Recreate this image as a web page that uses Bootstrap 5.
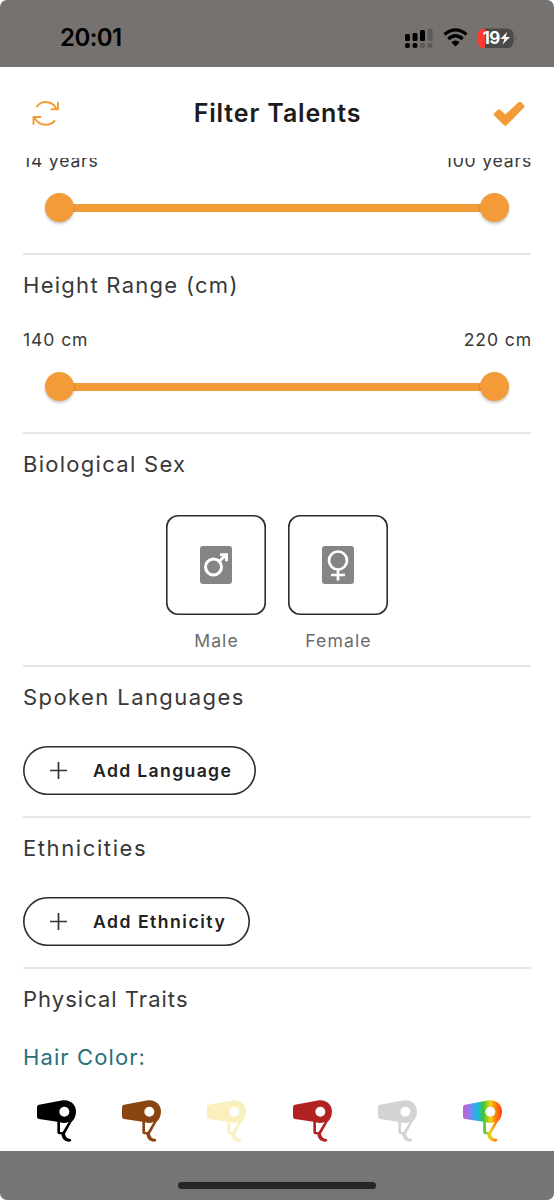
<!DOCTYPE html>
<html lang="en">
<head>
<meta charset="utf-8">
<meta name="viewport" content="width=device-width, initial-scale=1">
<title>Filter Talents</title>
<link href="https://cdn.jsdelivr.net/npm/bootstrap@5.3.0/dist/css/bootstrap.min.css" rel="stylesheet">
<style>
  body { font-family: Inter, "Noto Sans", sans-serif; color: #383838; background: #fff; }
  .phone { width: 554px; height: 1200px; border-radius: 7px; background: #fff; }
  .status { height: 67px; background: #76726f; padding: 9px 36px 0 60px; color: #000; }
  .clock { font-size: 24px; font-weight: 600; letter-spacing: -.55px; }
  .topbar { height: 91px; padding: 1px 29px 0 32px; }
  .topbar h1 { font-size: 25px; font-weight: 600; letter-spacing: .85px; color: #1c1c1e; margin: 0 -1px 0 1px; }
  .scroller { height: 993px; padding: 0 23px; }
  .block { border-bottom: 2px solid #e6e6e6; padding-top: 15px; }
  .block h2 { font-size: 22px; line-height: 30px; font-weight: 400; letter-spacing: 1.28px; margin: 0; }
  .block h2.t-wide { letter-spacing: 1.6px; }
  .block h2.t-mid { letter-spacing: 1.42px; }
  .block h2.t-slim { letter-spacing: 1.02px; }
  .ends { font-size: 17.6px; line-height: 24px; letter-spacing: .9px; font-weight: 400; margin: 28px -1px -1px 0; }
  .cut { margin-top: -9px; letter-spacing: .8px; }
  .slider { height: 29px; margin: 21px 22px 0; }
  .slider .bar { height: 8px; background: #f29b38; margin: 0 -2px; }
  .knob { width: 29px; height: 29px; border-radius: 50%; background: #f29b38; box-shadow: 0 2px 3px rgba(0,0,0,.22); position: relative; }
  .sexes { gap: 22px; margin-top: 36px; }
  .tile { width: 100px; height: 100px; box-shadow: inset 0 0 0 1.6px #2c2c2c; border-radius: 12px; background: #fff; }
  .cap { font-size: 17.6px; line-height: 24px; letter-spacing: 1.1px; font-weight: 400; color: #6c6c6c; margin: 14px -1px 0 0; }
  .pill, .pill:hover { height: 49px; border: 0; box-shadow: inset 0 0 0 1.6px #2c2c2c; border-radius: 25px; padding: 2px 24px 0 26px; margin-top: 34px; font-size: 17.6px; font-weight: 600; letter-spacing: 1.35px; color: #222; gap: 25px; }
  .pill.t-wide { letter-spacing: 1.5px; }
  .hair { color: #28707b; font-size: 22px; line-height: 30px; letter-spacing: 1.1px; font-weight: 400; margin-top: 28px; }
  .dryers { margin: 28px 29px 0 14px; }
  .foot { height: 49px; background: #757575; padding-top: 31px; }
  .home { width: 198px; height: 7px; border-radius: 4px; background: #262626; }
</style>
</head>
<body>
<svg width="0" height="0" class="position-absolute" aria-hidden="true">
  <defs>
    <linearGradient id="rainbow" gradientUnits="userSpaceOnUse" x1="0" y1="0" x2="117" y2="0">
      <stop offset="0" stop-color="#c95bd0"/><stop offset=".17" stop-color="#8a80ea"/><stop offset=".35" stop-color="#18b4ee"/><stop offset=".53" stop-color="#3fc636"/><stop offset=".7" stop-color="#f4d40c"/><stop offset=".85" stop-color="#ff7a10"/><stop offset="1" stop-color="#f8401a"/>
    </linearGradient>
    <symbol id="dryer" viewBox="0 0 117 126">
      <path fill-rule="evenodd" d="M6 14 L78 1 C100-2 117 14 117 34 C117 48 112 58 103 67 L84 101 C86 111 91 116 98 116 Q103 117 103 121 Q102 125 97 125 C82 125 75 116 73 103 H67 Q61 103 61 97 V65 L6 57 Q0 56 0 50 V21 Q0 15 6 14Z M82 20 A15 15 0 1 0 82 50 A15 15 0 1 0 82 20Z M69 67 V96 H77 L95 66 C84 70 77 69 69 67Z"/>
    </symbol>
  </defs>
</svg>
<div class="phone d-flex flex-column overflow-hidden">
  <div class="status d-flex align-items-center justify-content-between">
    <span class="clock">20:01</span>
    <svg width="114" height="24" viewBox="0 1 114 24">
      <g fill="#000"><rect x="1" y="9" width="5" height="7" rx="1.5"/><rect x="8.500" y="8" width="5" height="8" rx="1.500"/><rect x="16" y="5" width="5" height="11" rx="1.500"/><rect x="1" y="18" width="5" height="5" rx="2"/><rect x="8.500" y="18" width="5" height="5" rx="2"/></g>
      <g fill="#5d5957"><rect x="23.500" y="3.500" width="5" height="12.500" rx="1.500"/><rect x="16" y="18" width="5" height="5" rx="2"/><rect x="23.500" y="18" width="5" height="5" rx="2"/></g>
      <g fill="none" stroke="#000" stroke-width="3.300"><path d="M40.500 9.500 Q51.500 .300 62.500 9.500"/><path d="M44.300 14 Q51.500 7.500 58.700 14"/></g><path d="M47.300 17.200 Q51.500 13.800 55.700 17.200 L51.500 21.500Z"/>
      <rect x="74" y="3.500" width="35.500" height="19.500" rx="6" fill="#4a4a4a"/><path d="M81 3.500 H80 Q74 3.500 74 9.500 V17 Q74 23 80 23 H81Z" fill="#fd3b30"/><path d="M111 10.500 Q114 13 111 16Z" fill="#5d5957"/>
      <text x="78.500" y="19.300" font-size="17" font-weight="700" fill="#fff" letter-spacing="-.5">19</text><path d="M103 7 L96.500 14 H100.500 L98.500 19.500 L106 12 H101.800Z" fill="#fff"/>
    </svg>
  </div>
  <header class="topbar d-flex align-items-center justify-content-between">
    <svg width="28" height="28" viewBox="0 0 28 28" fill="none" stroke="#f29b38" stroke-width="1.900" stroke-linecap="round" stroke-linejoin="round"><path d="M5 7.500 Q8.500 2.800 14 3 Q21 3.300 24.700 10 M26 3.800 V10.300 H19.500 M22.500 22 Q19 26 13.500 25.800 Q6 25.500 2.300 18.500 M1.500 25 V18 H8.500"/></svg>
    <h1>Filter Talents</h1>
    <svg width="32" height="26" viewBox="0 -1 32 26"><path d="M1.200 12.200 L4.800 8.800 Q6 7.800 7.200 8.800 L12.200 13.600 L25.500 1.300 Q26.900 .200 28.200 1.300 L31 4.200 Q32 5.400 31 6.600 L13.600 24.300 Q12.300 25.400 11 24.300 L1.200 14.600 Q0 13.400 1.200 12.200Z" fill="#f29b38"/></svg>
  </header>
  <main class="scroller overflow-hidden">
    <section class="block pt-0" style="padding-bottom:31px">
      <div class="ends cut d-flex justify-content-between"><span>14 years</span><span>100 years</span></div>
      <div class="slider d-flex align-items-center"><span class="knob"></span><span class="bar flex-grow-1"></span><span class="knob"></span></div>
    </section>
    <section class="block" style="padding-bottom:31px">
      <h2>Height Range (cm)</h2>
      <div class="ends d-flex justify-content-between"><span>140 cm</span><span>220 cm</span></div>
      <div class="slider d-flex align-items-center"><span class="knob"></span><span class="bar flex-grow-1"></span><span class="knob"></span></div>
    </section>
    <section class="block" style="padding-bottom:12px">
      <h2>Biological Sex</h2>
      <div class="sexes d-flex justify-content-center text-center">
        <div><div class="tile d-flex align-items-center justify-content-center"><svg width="32" height="38" viewBox="0 0 32 38"><rect width="32" height="38" rx="3" fill="#858585"/><g fill="none" stroke="#fff" stroke-width="3"><circle cx="13.500" cy="21" r="8"/><path d="M19 15.500 L26 9 M20 8.700 H26.500 V15.200"/></g></svg></div><div class="cap">Male</div></div>
        <div><div class="tile d-flex align-items-center justify-content-center"><svg width="32" height="38" viewBox="0 0 32 38"><rect width="32" height="38" rx="3" fill="#858585"/><g fill="none" stroke="#fff" stroke-width="2.700"><circle cx="16" cy="14.500" r="9"/><path d="M16 23.500 V34.500 M9 29 H23"/></g></svg></div><div class="cap">Female</div></div>
      </div>
    </section>
    <section class="block" style="padding-bottom:21px">
      <h2 class="t-mid">Spoken Languages</h2>
      <button class="pill btn d-flex align-items-center"><svg width="19" height="19" viewBox="0 1 19 19" stroke="#333" stroke-width="1.700"><path d="M9.500 1 V18 M1 9.500 H18"/></svg><span>Add Language</span></button>
    </section>
    <section class="block" style="padding-bottom:21px">
      <h2 class="t-wide">Ethnicities</h2>
      <button class="pill t-wide btn d-flex align-items-center"><svg width="19" height="19" viewBox="0 1 19 19" stroke="#333" stroke-width="1.700"><path d="M9.500 1 V18 M1 9.500 H18"/></svg><span>Add Ethnicity</span></button>
    </section>
    <section class="block border-0">
      <h2 class="t-slim">Physical Traits</h2>
      <div class="hair">Hair Color:</div>
      <div class="dryers d-flex justify-content-between">
        <svg width="39" height="42" fill="#000"><use href="#dryer"/></svg>
        <svg width="39" height="42" fill="#8b4513"><use href="#dryer"/></svg>
        <svg width="39" height="42" fill="#faf0be"><use href="#dryer"/></svg>
        <svg width="39" height="42" fill="#b22222"><use href="#dryer"/></svg>
        <svg width="39" height="42" fill="#d3d3d3"><use href="#dryer"/></svg>
        <svg width="39" height="42" fill="url(#rainbow)"><use href="#dryer"/></svg>
      </div>
    </section>
  </main>
  <footer class="foot"><div class="home mx-auto"></div></footer>
</div>
<script src="https://cdn.jsdelivr.net/npm/bootstrap@5.3.0/dist/js/bootstrap.bundle.min.js"></script>
</body>
</html>
